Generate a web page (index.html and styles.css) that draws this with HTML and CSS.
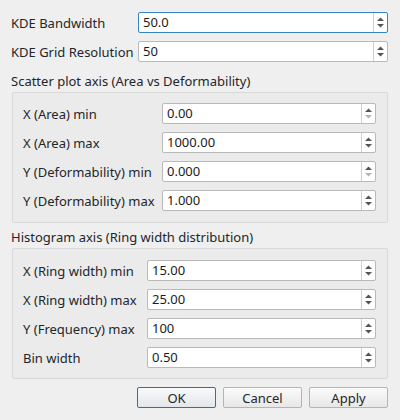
FILE: index.html
```html
<!DOCTYPE html>
<html>
<head>
<meta charset="utf-8">
<link rel="stylesheet" href="styles.css">
</head>
<body>
<div class="dialog">
  <div class="form top">
    <div class="row"><span class="lbl">KDE Bandwidth</span>
      <div class="spin focus"><span class="val">50.0</span><span class="btns"><svg viewBox="0 0 13 19" width="13" height="19"><polygon class="up" points="3,8 10,8 6.5,4.5"/><polygon class="dn" points="3,11 10,11 6.5,14.5"/></svg></span></div></div>
    <div class="row"><span class="lbl">KDE Grid Resolution</span>
      <div class="spin"><span class="val">50</span><span class="btns"><svg viewBox="0 0 13 19" width="13" height="19"><polygon class="up" points="3,8 10,8 6.5,4.5"/><polygon class="dn" points="3,11 10,11 6.5,14.5"/></svg></span></div></div>
  </div>

  <div class="section s1">
    <div class="gtitle">Scatter plot axis (Area vs Deformability)</div>
    <div class="gbox g1">
      <div class="form f1">
        <div class="row"><span class="lbl">X (Area) min</span>
          <div class="spin"><span class="val">0.00</span><span class="btns"><svg viewBox="0 0 13 19" width="13" height="19"><polygon class="up" points="3,8 10,8 6.5,4.5"/><polygon class="dn off" points="3,11 10,11 6.5,14.5"/></svg></span></div></div>
        <div class="row"><span class="lbl">X (Area) max</span>
          <div class="spin"><span class="val">1000.00</span><span class="btns"><svg viewBox="0 0 13 19" width="13" height="19"><polygon class="up" points="3,8 10,8 6.5,4.5"/><polygon class="dn" points="3,11 10,11 6.5,14.5"/></svg></span></div></div>
        <div class="row"><span class="lbl">Y (Deformability) min</span>
          <div class="spin"><span class="val">0.000</span><span class="btns"><svg viewBox="0 0 13 19" width="13" height="19"><polygon class="up" points="3,8 10,8 6.5,4.5"/><polygon class="dn off" points="3,11 10,11 6.5,14.5"/></svg></span></div></div>
        <div class="row"><span class="lbl">Y (Deformability) max</span>
          <div class="spin"><span class="val">1.000</span><span class="btns"><svg viewBox="0 0 13 19" width="13" height="19"><polygon class="up" points="3,8 10,8 6.5,4.5"/><polygon class="dn" points="3,11 10,11 6.5,14.5"/></svg></span></div></div>
      </div>
    </div>
  </div>

  <div class="section s2">
    <div class="gtitle">Histogram axis (Ring width distribution)</div>
    <div class="gbox g2">
      <div class="form f2">
        <div class="row"><span class="lbl">X (Ring width) min</span>
          <div class="spin"><span class="val">15.00</span><span class="btns"><svg viewBox="0 0 13 19" width="13" height="19"><polygon class="up" points="3,8 10,8 6.5,4.5"/><polygon class="dn" points="3,11 10,11 6.5,14.5"/></svg></span></div></div>
        <div class="row"><span class="lbl">X (Ring width) max</span>
          <div class="spin"><span class="val">25.00</span><span class="btns"><svg viewBox="0 0 13 19" width="13" height="19"><polygon class="up" points="3,8 10,8 6.5,4.5"/><polygon class="dn" points="3,11 10,11 6.5,14.5"/></svg></span></div></div>
        <div class="row"><span class="lbl">Y (Frequency) max</span>
          <div class="spin"><span class="val">100</span><span class="btns"><svg viewBox="0 0 13 19" width="13" height="19"><polygon class="up" points="3,8 10,8 6.5,4.5"/><polygon class="dn" points="3,11 10,11 6.5,14.5"/></svg></span></div></div>
        <div class="row"><span class="lbl">Bin width</span>
          <div class="spin"><span class="val">0.50</span><span class="btns"><svg viewBox="0 0 13 19" width="13" height="19"><polygon class="up" points="3,8 10,8 6.5,4.5"/><polygon class="dn" points="3,11 10,11 6.5,14.5"/></svg></span></div></div>
      </div>
    </div>
  </div>

  <div class="buttons">
    <button class="btn default">OK</button>
    <button class="btn">Cancel</button>
    <button class="btn">Apply</button>
  </div>
</div>
</body>
</html>
```

FILE: styles.css
```css
html, body {
  margin: 0;
  padding: 0;
  background: #efefef;
}
body {
  font-family: "Noto Sans", "DejaVu Sans", sans-serif;
  font-size: 13px;
  color: #232629;
  width: 400px;
  height: 420px;
  overflow: hidden;
}
.dialog {
  padding: 12px 12px 0 11px;
}
.form {
  display: flex;
  flex-direction: column;
  gap: 8px;
}
.row {
  display: flex;
  align-items: center;
  height: 21px;
}
.lbl {
  flex: none;
  white-space: nowrap;
}
.top .lbl { width: 127px; }
.f1 .lbl { width: 139px; }
.f2 .lbl { width: 124px; }
.spin {
  flex: 1;
  height: 21px;
  box-sizing: border-box;
  display: flex;
  align-items: stretch;
  background: #ffffff;
  border: 1px solid #b9b9b9;
  border-radius: 2px;
}
.spin.focus {
  border-color: #3584c4;
}
.val {
  flex: 1;
  padding-left: 4px;
  line-height: 19px;
  color: #1b1b1b;
}
.btns {
  flex: none;
  width: 13px;
  border-left: 1px solid #cfcfcf;
  display: flex;
  align-items: center;
}
.btns svg { display: block; }
.up, .dn { fill: #555555; }
.dn.off { fill: #b4b4b4; }

.section {
  margin-left: 1px;
}
.s1 { margin-top: 10px; }
.s2 { margin-top: 5px; }
.gtitle {
  line-height: 18px;
  height: 18px;
  margin-left: -1px;
  white-space: nowrap;
}
.gbox {
  margin-top: 2px;
  border: 1px solid #d8d8d8;
  border-radius: 2px;
  background: #ebebeb;
  padding: 10px 11px 11px 10px;
}
.g2 { padding: 11px 11px 10px 10px; }

.buttons {
  display: flex;
  justify-content: flex-end;
  gap: 7px;
  margin-top: 8px;
}
.btn {
  width: 79px;
  height: 21px;
  box-sizing: border-box;
  padding: 0;
  font-family: "Noto Sans", "DejaVu Sans", sans-serif;
  font-size: 13px;
  color: #232629;
  border: 1px solid #b4b4b4;
  border-radius: 2px;
  background: linear-gradient(#fbfbfb, #e7e7e7);
}
.btn.default {
  border-color: #2f6fad;
  background: linear-gradient(#f8f9fa, #e3e7eb);
}
```
